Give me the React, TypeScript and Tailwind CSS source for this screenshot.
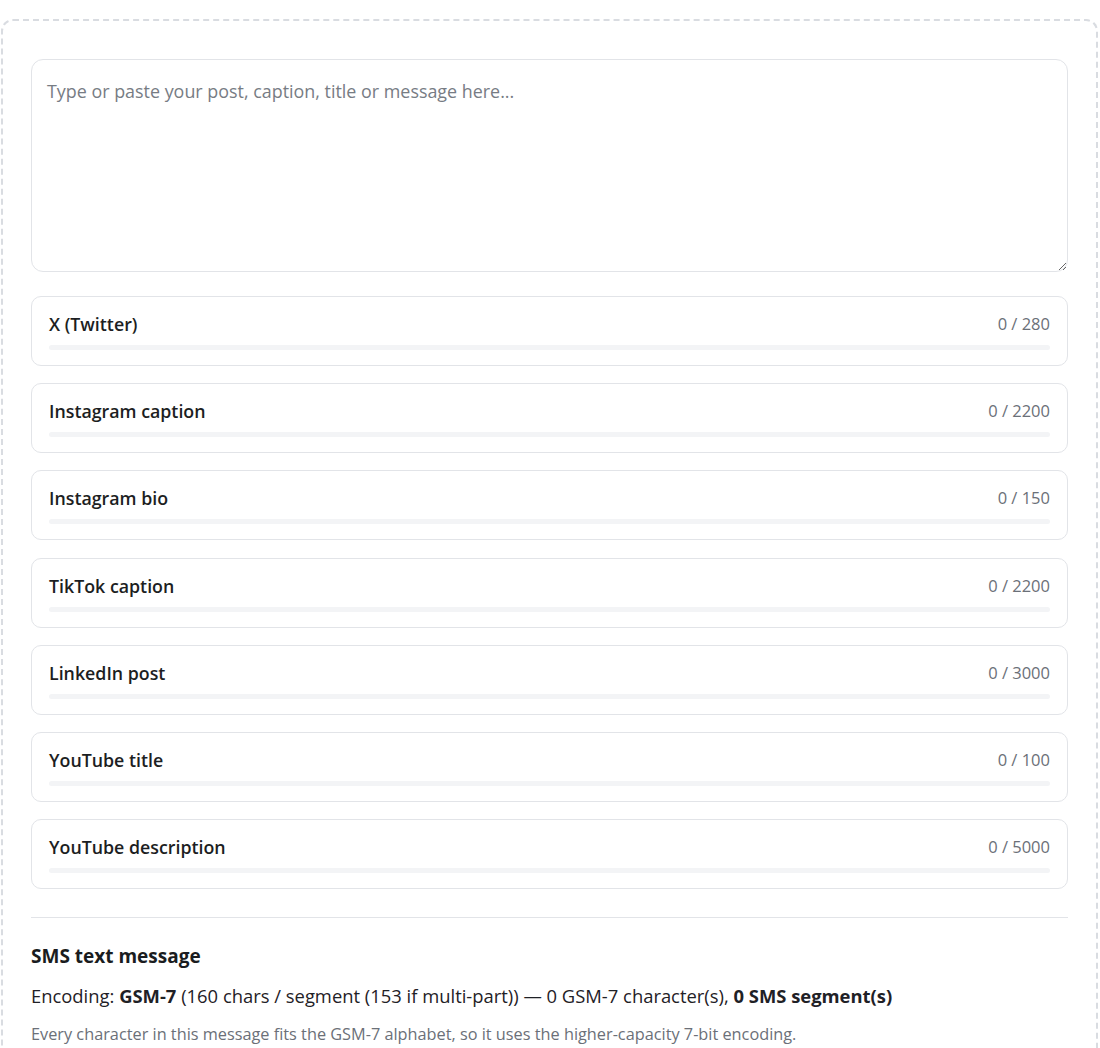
import { useState } from 'react';

const platforms = [
  { name: 'X (Twitter)', limit: 280 },
  { name: 'Instagram caption', limit: 2200 },
  { name: 'Instagram bio', limit: 150 },
  { name: 'TikTok caption', limit: 2200 },
  { name: 'LinkedIn post', limit: 3000 },
  { name: 'YouTube title', limit: 100 },
  { name: 'YouTube description', limit: 5000 },
];

export default function App() {
  const [text, setText] = useState('');
  const count = text.length;

  return (
    <div className="min-h-screen bg-white pt-[19px] pl-px pr-[2px] font-['Open_Sans',sans-serif] text-[#1f2937]">
      <div className="rounded-xl border-2 border-dashed border-[#d9dce1] px-[28px] pt-[38px] pb-[40px]">
        <textarea
          value={text}
          onChange={(e) => setText(e.target.value)}
          placeholder="Type or paste your post, caption, title or message here..."
          className="block h-[213px] w-full resize-y rounded-xl border border-[#e2e4e8] px-[15px] py-[18px] text-[17.9px] leading-[26px] text-[#1f2937] placeholder:text-[#777c84] focus:outline-none"
        />

        <div className="mt-[24px] flex flex-col gap-[17.2px]">
          {platforms.map((p) => {
            const pct = Math.min(100, (count / p.limit) * 100);
            return (
              <div key={p.name} className="rounded-[10px] border border-[#e2e4e8] px-[17px] pt-[14px] pb-[15px]">
                <div className="flex items-center justify-between">
                  <span className="text-[17.8px] font-semibold leading-[26px] text-[#1c1e22]">{p.name}</span>
                  <span className="text-[16.5px] leading-[26px] text-[#6b7078]">
                    {count} / {p.limit}
                  </span>
                </div>
                <div className="mt-[8px] h-[5px] w-full overflow-hidden rounded-full bg-[#f3f4f6]">
                  <div className="h-full rounded-full bg-[#22c55e]" style={{ width: `${pct}%` }} />
                </div>
              </div>
            );
          })}
        </div>

        <div className="mt-[28px] border-t border-[#e2e4e8] pt-[25px]">
          <h2 className="text-[19px] font-bold leading-[26px] text-[#1a1c20]">SMS text message</h2>
          <p className="mt-[14px] text-[18.4px] leading-[26px] text-[#1f2126]">
            Encoding: <strong>GSM-7</strong> (160 chars / segment (153 if multi-part)) — {count} GSM-7 character(s),{' '}
            <strong>{count === 0 ? 0 : Math.ceil(count / 160)} SMS segment(s)</strong>
          </p>
          <p className="mt-[13px] text-[16.3px] leading-[24px] text-[#6b7078]">
            Every character in this message fits the GSM-7 alphabet, so it uses the higher-capacity 7-bit encoding.
          </p>
        </div>
      </div>
    </div>
  );
}
